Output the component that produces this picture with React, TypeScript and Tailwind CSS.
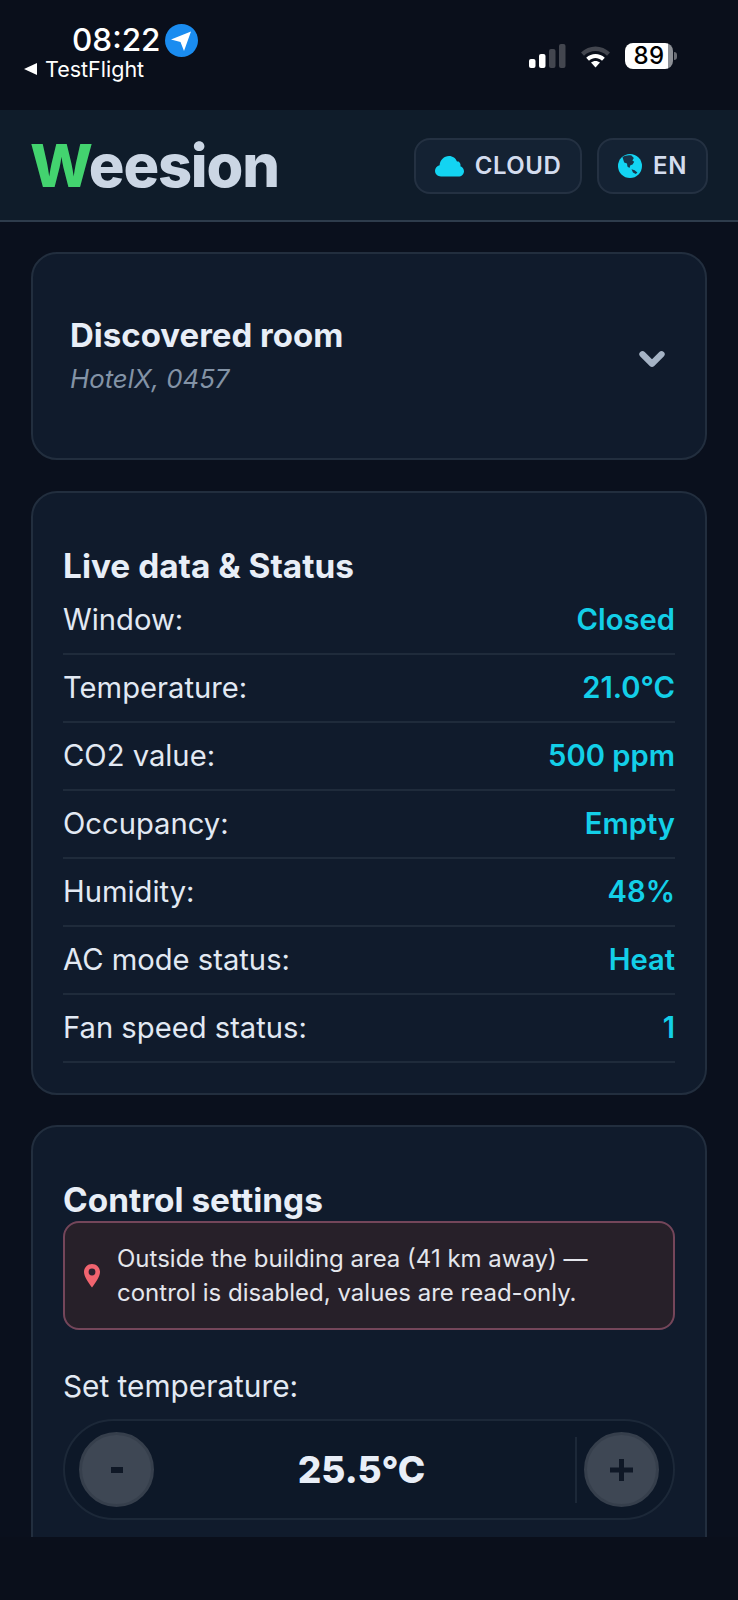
import { ChevronDown } from "lucide-react"

const liveRows = [
  { label: "Window:", value: "Closed" },
  { label: "Temperature:", value: "21.0°C" },
  { label: "CO2 value:", value: "500 ppm" },
  { label: "Occupancy:", value: "Empty" },
  { label: "Humidity:", value: "48%" },
  { label: "AC mode status:", value: "Heat" },
  { label: "Fan speed status:", value: "1" },
]

function SignalBars() {
  return (
    <svg width="37" height="24" viewBox="0 0 37 24">
      <rect x="0" y="15" width="6.5" height="9" rx="2" fill="#fff" />
      <rect x="10" y="10" width="6.5" height="14" rx="2" fill="#fff" />
      <rect x="20" y="5" width="6.5" height="19" rx="2" fill="#43464f" />
      <rect x="30" y="0" width="6.5" height="24" rx="2" fill="#43464f" />
    </svg>
  )
}

function WifiIcon() {
  return (
    <svg width="31" height="24" viewBox="0 0 31 24">
      <path d="M1 8.5C9 0.5 22 0.5 30 8.5L27 11.7C20.5 5.5 10.5 5.5 4 11.7Z" fill="#43464f" />
      <path d="M6.2 13.8C11.5 8.8 19.5 8.8 24.8 13.8L22 16.8C18 13.2 13 13.2 9 16.8Z" fill="#fff" />
      <path d="M11 18.6C13.5 16.4 17.5 16.4 20 18.6L15.5 23.5Z" fill="#fff" />
    </svg>
  )
}

function NavArrow() {
  return (
    <svg width="33" height="33" viewBox="0 0 33 33">
      <circle cx="16.5" cy="16.5" r="16.5" fill="#1a8cf0" />
      <path d="M6 15.5L26 7.5L19 27L15.5 18Z" fill="#fff" />
    </svg>
  )
}

function CloudIcon() {
  return (
    <svg width="29" height="22" viewBox="0 0 29 22">
      <path
        d="M6 21.5C2.6 21.5 0 19 0 15.8C0 13 2 10.8 4.6 10.2C5 5 9 1 14 1C17.8 1 20.8 3.2 22 6.6C22.6 6.4 23 6.4 23.6 6.4C25.6 8 25.8 10 25.4 11.2C27.6 12 29 14 29 16.2C29 19.2 26.6 21.5 23.4 21.5Z"
        fill="#13d4f2"
      />
    </svg>
  )
}

function GlobeIcon() {
  return (
    <svg width="24" height="24" viewBox="0 0 24 24">
      <circle cx="12" cy="12" r="12" fill="#13d4f2" />
      <path
        d="M4.5 3.2C7 1.4 10.5 0.8 13.5 1.5L15.8 4L14.4 6.4L16.2 7.8L14.6 10.4L12.4 11.2L11.4 14L9.4 12.4L9 9.6L6.2 8.4Z"
        fill="#17344a"
      />
      <path d="M13.5 15.2L16.6 16.2L19.4 18.4L17.8 20L15 18.6Z" fill="#17344a" />
    </svg>
  )
}

function PinIcon() {
  return (
    <svg width="16" height="24" viewBox="0 0 16 24">
      <path
        d="M8 0C3.6 0 0 3.5 0 7.9C0 12.6 4.6 18.6 8 23.5C11.4 18.6 16 12.6 16 7.9C16 3.5 12.4 0 8 0Z"
        fill="#f0646f"
      />
      <circle cx="8" cy="8" r="3.4" fill="#2a2230" />
    </svg>
  )
}

function StepButton({ sign }: { sign: string }) {
  return (
    <button className="flex h-[75px] w-[75px] shrink-0 items-center justify-center rounded-full border-[3px] border-[#363f4c] bg-[#3e4754]">
      {sign === "-" ? (
        <span className="h-[6px] w-[12px] bg-[#0f1826]" />
      ) : (
        <svg width="23" height="22" viewBox="0 0 23 22">
          <path d="M9 0H14V8.5H23V13.5H14V22H9V13.5H0V8.5H9Z" fill="#0f1826" />
        </svg>
      )}
    </button>
  )
}

export default function App() {
  return (
    <div className="flex h-[1600px] w-[738px] flex-col overflow-hidden bg-[#0a0f1b] font-['Inter',sans-serif] text-[#e8eef7]">
      {/* iOS status bar */}
      <div className="relative h-[110px] shrink-0">
        <div className="absolute left-[72px] top-[22px] flex items-center gap-[4px]">
          <span className="text-[31.5px] font-medium leading-[36px] text-white">08:22</span>
          <NavArrow />
        </div>
        <div className="absolute left-[24px] top-[57px] flex items-center gap-[8px]">
          <span className="h-0 w-0 border-y-[6.5px] border-r-[13px] border-y-transparent border-r-white" />
          <span className="text-[21.5px] leading-[24px] text-white">TestFlight</span>
        </div>
        <div className="absolute left-[529px] top-[43px] flex items-center gap-[14px]">
          <SignalBars />
          <WifiIcon />
          <div className="flex items-center gap-[1px]">
            <div className="flex h-[26px] w-[48px] items-center justify-center rounded-[8px] bg-[linear-gradient(90deg,#ffffff_90%,#8d9096_90%)] text-[24px] font-medium tracking-[0.5px] text-black">
              89
            </div>
            <span className="h-[8px] w-[3px] rounded-r-full bg-[#6b6e75]" />
          </div>
        </div>
      </div>

      {/* App header */}
      <header className="flex h-[112px] shrink-0 items-center justify-between border-b-2 border-[#2e3c4c] bg-[#0f1c2a] pl-[30px] pr-[30px] pt-[2px]">
        <h1 className="text-[59.5px] font-extrabold leading-none tracking-[-1.2px] text-[#cbd6e4]">
          <span className="text-[#43d36f]">W</span>eesion
        </h1>
        <div className="flex gap-[15px]">
          <button className="flex h-[56px] w-[168px] items-center justify-center gap-[11px] rounded-[16px] border-2 border-[#243142] bg-[#142233] text-[24px] font-semibold tracking-[0.5px] text-[#d3dcee]">
            <CloudIcon />
            CLOUD
          </button>
          <button className="flex h-[56px] w-[111px] items-center justify-center gap-[11px] rounded-[16px] border-2 border-[#243142] bg-[#142233] text-[24px] font-semibold tracking-[0.5px] text-[#d3dcee]">
            <GlobeIcon />
            EN
          </button>
        </div>
      </header>

      {/* Scrolling content, cut off by the home indicator strip */}
      <main className="flex h-[1315px] shrink-0 flex-col overflow-hidden bg-[#0a101d] px-[31px] pt-[30px]">
        <section className="mb-[31px] flex h-[208px] shrink-0 items-center justify-between rounded-[26px] border-2 border-[#222e3e] bg-[#101b2c] pl-[37px] pr-[34px]">
          <div className="pb-[2px]">
            <h2 className="text-[33px] font-bold leading-[40px] text-[#e8eef7]">Discovered room</h2>
            <p className="mt-[8px] text-[25.8px] italic leading-[32px] text-[#8393a6]">HotelX, 0457</p>
          </div>
          <ChevronDown size={38} strokeWidth={4} className="mt-[6px] text-[#a5b3c5]" />
        </section>

        <section className="mb-[30px] h-[604px] shrink-0 rounded-[26px] border-2 border-[#222e3e] bg-[#101b2c] px-[30px] pt-[53px]">
          <h2 className="text-[33.4px] font-bold leading-[40px] text-[#e8eef7]">Live data &amp; Status</h2>
          <div className="pt-[1px]">
            {liveRows.map((row) => (
              <div
                key={row.label}
                className="flex h-[68px] items-center justify-between border-b-2 border-[#1f2b3b] text-[29.2px]"
              >
                <span className="text-[#e2e9f3]">{row.label}</span>
                <span className="font-semibold text-[#13cfe8]">{row.value}</span>
              </div>
            ))}
          </div>
        </section>

        <section className="h-[440px] shrink-0 rounded-[26px] border-2 border-[#222e3e] bg-[#101b2c] px-[30px] pt-[53px]">
          <h2 className="text-[33.4px] font-bold leading-[40px] text-[#e8eef7]">Control settings</h2>
          <div className="mt-[1px] flex h-[109px] items-center gap-[17px] rounded-[16px] border-2 border-[#74465a] bg-[#272029] pl-[19px]">
            <PinIcon />
            <p className="text-[24px] leading-[34px] text-[#e4e6ec]">
              Outside the building area (41 km away) —<br />
              control is disabled, values are read-only.
            </p>
          </div>
          <p className="mt-[36px] text-[29.8px] leading-[40px] text-[#e2e9f3]">Set temperature:</p>
          <div className="mt-[13px] flex h-[101px] items-center rounded-full border-2 border-[#1c2838] bg-[#0d1828] px-[14px]">
            <StepButton sign="-" />
            <div className="flex-1 pr-[6px] text-center text-[37px] font-extrabold text-[#e8eef7]">25.5°C</div>
            <div className="mr-[7px] h-[66px] w-[2px] bg-[#1c2838]" />
            <StepButton sign="+" />
          </div>
        </section>
      </main>

      <div className="flex-1" />
    </div>
  )
}
